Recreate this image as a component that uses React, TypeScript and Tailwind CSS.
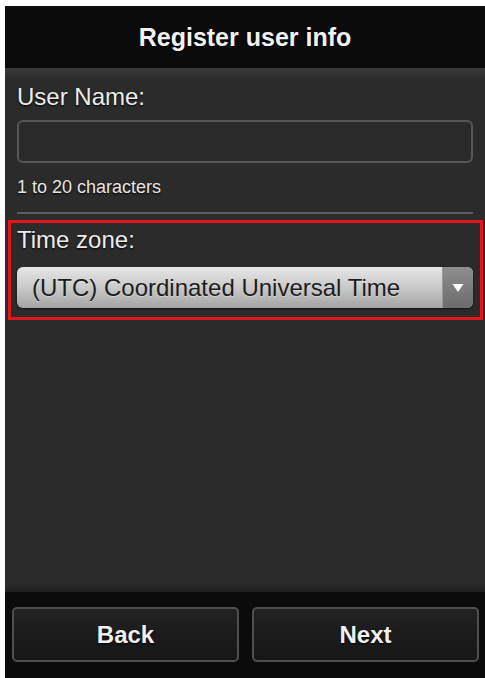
const font = { fontFamily: '"Liberation Sans", Arial, sans-serif' }

export default function App() {
  return (
    <div className="min-h-[678px] bg-white pl-[5px] pt-[6px]" style={font}>
      <div className="flex h-[672px] w-[480px] flex-col">
        <header className="flex h-[62px] shrink-0 items-center justify-center bg-[#0b0b0b]">
          <h1 className="text-[25px] font-bold leading-[28px] text-[#f2f2f2] [text-shadow:0_1px_2px_#000]">
            Register user info
          </h1>
        </header>

        <main className="flex flex-1 flex-col bg-[linear-gradient(#3b3b3b,#2b2b2b_12px,#2b2b2b_calc(100%-8px),#1e1e1e)] px-[12px] pt-[15px]">
          <label className="text-[24px] leading-[28px] text-[#ececec] [text-shadow:0_1px_2px_#000]">
            User Name:
          </label>
          <div className="mt-[9px] h-[43px] rounded-[6px] border-2 border-[#575757] bg-[#2a2a2a]" />
          <p className="mt-[13px] text-[18px] leading-[22px] text-[#e6e6e6] [text-shadow:0_1px_2px_#000]">
            1 to 20 characters
          </p>
          <div className="mt-[14px] h-[2px] bg-[#5e5e5e]" />

          <section className="-ml-[9px] -mr-[10px] mt-[6px] border-[3px] border-[#e2161b] pb-[9px] pl-[6px] pr-[7px] pt-[3px]">
            <label className="block text-[24px] leading-[28px] text-[#ececec] [text-shadow:0_1px_2px_#000]">
              Time zone:
            </label>
            <div className="mt-[13px] flex h-[41px] overflow-hidden rounded-[6px] bg-[linear-gradient(#e6e6e6,#c9c9c9_50%,#a4a4a4)] shadow-[0_1px_2px_rgba(0,0,0,0.6)]">
              <div className="flex flex-1 items-center pl-[15px] text-[24px] leading-[28px] text-[#1c1c1c] [text-shadow:0_1px_0_rgba(255,255,255,0.4)]">
                (UTC) Coordinated Universal Time
              </div>
              <div className="flex w-[31px] items-center justify-center border-l border-[#9a9a9a] bg-[linear-gradient(#8e8e8e,#6c6c6c)]">
                <svg width="12" height="10" viewBox="0 0 12 10">
                  <path d="M0.5 1 L11.5 1 L6 9 Z" fill="#fff" />
                </svg>
              </div>
            </div>
          </section>
        </main>

        <footer className="flex h-[86px] shrink-0 gap-[13px] bg-[#0b0b0b] pl-[7px] pr-[6px] pt-[15px]">
          <button className="flex h-[55px] flex-1 items-center justify-center rounded-[5px] border-2 border-[#4f4f4f] bg-[linear-gradient(#222,#161616)] text-[24px] font-bold text-[#f0f0f0] [text-shadow:0_1px_2px_#000]">
            Back
          </button>
          <button className="flex h-[55px] flex-1 items-center justify-center rounded-[5px] border-2 border-[#4f4f4f] bg-[linear-gradient(#222,#161616)] text-[24px] font-bold text-[#f0f0f0] [text-shadow:0_1px_2px_#000]">
            Next
          </button>
        </footer>
      </div>
    </div>
  )
}
